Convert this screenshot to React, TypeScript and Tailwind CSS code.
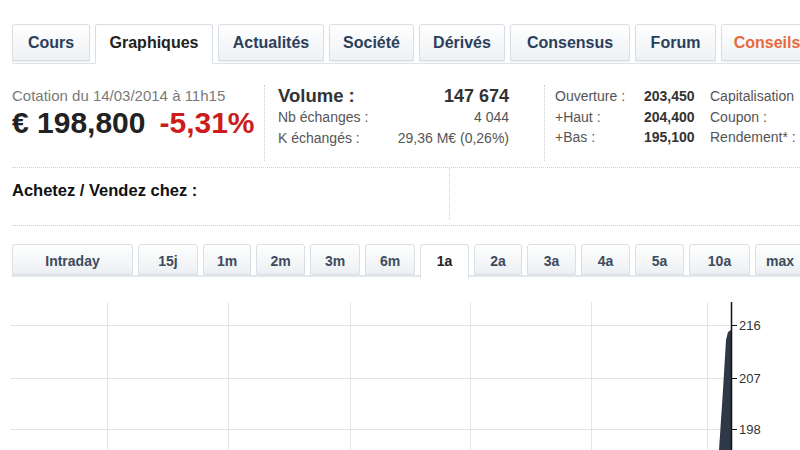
import React from "react";

const topTabs = [
  { label: "Cours", w: 78 },
  { label: "Graphiques", w: 118, active: true },
  { label: "Actualités", w: 106 },
  { label: "Société", w: 85 },
  { label: "Dérivés", w: 86 },
  { label: "Consensus", w: 120 },
  { label: "Forum", w: 81 },
  { label: "Conseils", w: 92, orange: true },
];

const periods = [
  { label: "Intraday", w: 121 },
  { label: "15j", w: 60 },
  { label: "1m", w: 48 },
  { label: "2m", w: 49 },
  { label: "3m", w: 50 },
  { label: "6m", w: 50 },
  { label: "1a", w: 49, active: true },
  { label: "2a", w: 48 },
  { label: "3a", w: 49 },
  { label: "4a", w: 49 },
  { label: "5a", w: 49 },
  { label: "10a", w: 61 },
  { label: "max", w: 50 },
];

function Chart() {
  const vx = [107, 228, 350, 470, 591, 707];
  const hy = [25, 78, 129];
  const labels = ["216", "207", "198"];
  return (
    <svg width="800" height="150" viewBox="0 0 800 150" className="block">
      {vx.map((x) => (
        <line key={x} x1={x + 0.5} y1={2} x2={x + 0.5} y2={150} stroke="#e6e6e6" strokeWidth="1" />
      ))}
      {hy.map((y) => (
        <line key={y} x1={10} y1={y + 0.5} x2={731} y2={y + 0.5} stroke="#e3e3e3" strokeWidth="1" />
      ))}
      <polygon points="719,150 723,90 726,40 728,32 731,30 731,150" fill="#2e3846" />
      <line x1="731.5" y1="2" x2="731.5" y2="150" stroke="#111" strokeWidth="1.5" />
      {hy.map((y, i) => (
        <g key={i}>
          <line x1="731" y1={y + 0.5} x2="737" y2={y + 0.5} stroke="#111" strokeWidth="1" />
          <text x="739" y={y + 5} fontSize="13" fill="#333" fontFamily="Liberation Sans, Arial, sans-serif">
            {labels[i]}
          </text>
        </g>
      ))}
    </svg>
  );
}

export default function App() {
  return (
    <div
      className="w-[800px] h-[450px] overflow-hidden bg-white relative"
      style={{ fontFamily: '"Liberation Sans", Arial, sans-serif' }}
    >
      {/* top tabs */}
      <div className="pt-[24px] pl-[12px]">
        <div className="flex gap-[5px] border-b border-[#dfe3e8] w-[820px] h-[40px]">
          {topTabs.map((t) => (
            <div
              key={t.label}
              style={{ width: t.w }}
              className={
                "shrink-0 flex items-center justify-center text-[16px] font-bold rounded-t-[3px] border border-[#d9dee4] " +
                (t.active
                  ? "h-[40px] bg-white border-b-white text-[#222] -mb-px pb-[2px]"
                  : "h-[37px] bg-gradient-to-b from-white to-[#eef1f4] shadow-[0_1px_1px_rgba(0,0,0,0.08)] ") +
                (t.orange ? "text-[#e8693c]" : t.active ? "" : "text-[#2b3f5c]")
              }
            >
              {t.label}
            </div>
          ))}
        </div>
      </div>

      {/* quote info */}
      <div className="flex pl-[12px] pt-[24px] h-[104px]">
        <div className="w-[253px] shrink-0 border-r border-dotted border-[#cfcfcf] h-[76px] -mt-[3px]">
          <div className="text-[15px] text-[#7a7a7a] leading-[18px] mt-[2px]">Cotation du 14/03/2014 à 11h15</div>
          <div className="flex items-baseline mt-[1px] leading-[34px]">
            <span className="text-[30px] font-bold text-[#222]">€ 198,800</span>
            <span className="text-[30px] font-bold text-[#cc1c1c] ml-[14px]">-5,31%</span>
          </div>
        </div>
        <div className="w-[280px] shrink-0 pl-[13px] pr-[35px] border-r border-dotted border-[#cfcfcf] h-[76px] -mt-[3px]">
          <div className="flex justify-between items-baseline leading-[22px]">
            <span className="text-[18.5px] font-bold text-[#333]">Volume :</span>
            <span className="text-[18px] font-bold text-[#333]">147 674</span>
          </div>
          <div className="flex justify-between text-[14px] text-[#555] leading-[21px]">
            <span>Nb échanges :</span>
            <span>4 044</span>
          </div>
          <div className="flex justify-between text-[14px] text-[#555] leading-[21px]">
            <span>K échangés :</span>
            <span>29,36 M€ (0,26%)</span>
          </div>
        </div>
        <div className="pl-[10px] text-[14px] text-[#555] leading-[20.5px] -mt-[2px]">
          <div className="flex whitespace-nowrap">
            <span className="w-[89px]">Ouverture :</span>
            <span className="w-[66px] font-bold text-[#333]">203,450</span>
            <span>Capitalisation</span>
          </div>
          <div className="flex whitespace-nowrap">
            <span className="w-[89px]">+Haut :</span>
            <span className="w-[66px] font-bold text-[#333]">204,400</span>
            <span>Coupon :</span>
          </div>
          <div className="flex whitespace-nowrap">
            <span className="w-[89px]">+Bas :</span>
            <span className="w-[66px] font-bold text-[#333]">195,100</span>
            <span>Rendement* :</span>
          </div>
        </div>
      </div>

      {/* buy / sell */}
      <div className="ml-[12px] border-t border-b border-dotted border-[#d0d0d0] h-[59px] flex -mt-[1px]">
        <div className="w-[438px] border-r border-dotted border-[#d0d0d0] h-[52px]">
          <div className="text-[16.5px] font-bold text-[#111] pt-[13px] leading-[19px]">
            Achetez / Vendez chez :
          </div>
        </div>
      </div>

      {/* periods */}
      <div className="pl-[12px] pt-[18px]">
        <div className="flex gap-[5px] border-b-2 border-[#e3e6ea] w-[820px] h-[33px]">
          {periods.map((p) => (
            <div
              key={p.label}
              style={{ width: p.w }}
              className={
                "shrink-0 flex items-center justify-center text-[14px] font-bold rounded-t-[3px] border border-[#dadfe4] " +
                (p.active
                  ? "h-[35px] bg-white border-b-white text-[#222] -mb-[2px]"
                  : "h-[31px] pt-[3px] bg-gradient-to-b from-white to-[#eceff2] text-[#3d4b5c]")
              }
            >
              {p.label}
            </div>
          ))}
        </div>
      </div>

      {/* chart */}
      <div className="mt-[23px]">
        <Chart />
      </div>
    </div>
  );
}
